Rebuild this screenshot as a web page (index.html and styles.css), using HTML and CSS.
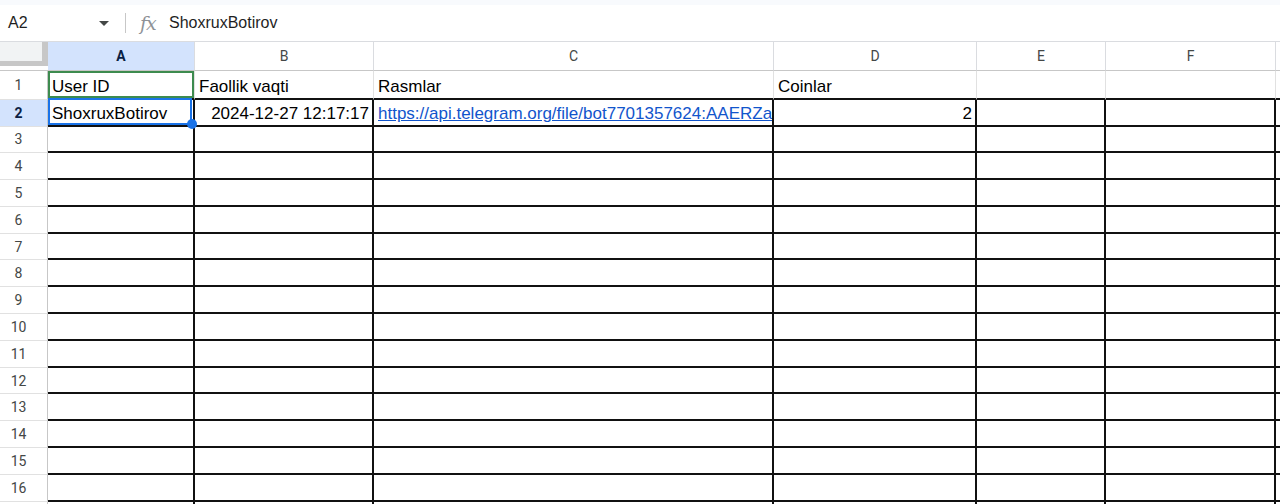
FILE: index.html
```html
<!DOCTYPE html>
<html>
<head>
<meta charset="utf-8">
<link rel="stylesheet" href="styles.css">
</head>
<body>
<div class="app">
  <div class="topstrip"></div>
  <div class="fbar">
    <div class="namebox"><span class="ref">A2</span><span class="caret"></span></div>
    <div class="sep"></div>
    <div class="fx">fx</div>
    <div class="ftext">ShoxruxBotirov</div>
  </div>
  <div class="sheet">
    <div class="corner"><div class="corner-in"></div></div>
    <div class="ch ch-sel">A</div>
    <div class="ch">B</div>
    <div class="ch">C</div>
    <div class="ch">D</div>
    <div class="ch">E</div>
    <div class="ch">F</div>
    <div class="ch ch-last"></div>

    <div class="rh">1</div>
    <div class="c r1 a1">User ID</div>
    <div class="c r1">Faollik vaqti</div>
    <div class="c r1">Rasmlar</div>
    <div class="c r1">Coinlar</div>
    <div class="c r1"></div>
    <div class="c r1"></div>
    <div class="c r1 last"></div>

    <div class="rh rh-sel">2</div>
    <div class="c a2">ShoxruxBotirov</div>
    <div class="c num">2024-12-27 12:17:17</div>
    <div class="c"><a class="link" href="#">https://api.telegram.org/file/bot7701357624:AAERZa</a></div>
    <div class="c num">2</div>
    <div class="c"></div>
    <div class="c"></div>
    <div class="c last"></div>

    <div class="rh">3</div><div class="c"></div><div class="c"></div><div class="c"></div><div class="c"></div><div class="c"></div><div class="c"></div><div class="c last"></div>
    <div class="rh">4</div><div class="c"></div><div class="c"></div><div class="c"></div><div class="c"></div><div class="c"></div><div class="c"></div><div class="c last"></div>
    <div class="rh">5</div><div class="c"></div><div class="c"></div><div class="c"></div><div class="c"></div><div class="c"></div><div class="c"></div><div class="c last"></div>
    <div class="rh">6</div><div class="c"></div><div class="c"></div><div class="c"></div><div class="c"></div><div class="c"></div><div class="c"></div><div class="c last"></div>
    <div class="rh">7</div><div class="c"></div><div class="c"></div><div class="c"></div><div class="c"></div><div class="c"></div><div class="c"></div><div class="c last"></div>
    <div class="rh">8</div><div class="c"></div><div class="c"></div><div class="c"></div><div class="c"></div><div class="c"></div><div class="c"></div><div class="c last"></div>
    <div class="rh">9</div><div class="c"></div><div class="c"></div><div class="c"></div><div class="c"></div><div class="c"></div><div class="c"></div><div class="c last"></div>
    <div class="rh">10</div><div class="c"></div><div class="c"></div><div class="c"></div><div class="c"></div><div class="c"></div><div class="c"></div><div class="c last"></div>
    <div class="rh">11</div><div class="c"></div><div class="c"></div><div class="c"></div><div class="c"></div><div class="c"></div><div class="c"></div><div class="c last"></div>
    <div class="rh">12</div><div class="c"></div><div class="c"></div><div class="c"></div><div class="c"></div><div class="c"></div><div class="c"></div><div class="c last"></div>
    <div class="rh">13</div><div class="c"></div><div class="c"></div><div class="c"></div><div class="c"></div><div class="c"></div><div class="c"></div><div class="c last"></div>
    <div class="rh">14</div><div class="c"></div><div class="c"></div><div class="c"></div><div class="c"></div><div class="c"></div><div class="c"></div><div class="c last"></div>
    <div class="rh">15</div><div class="c"></div><div class="c"></div><div class="c"></div><div class="c"></div><div class="c"></div><div class="c"></div><div class="c last"></div>
    <div class="rh">16</div><div class="c"></div><div class="c"></div><div class="c"></div><div class="c"></div><div class="c"></div><div class="c"></div><div class="c last"></div>
    <div class="rh"></div><div class="c"></div><div class="c"></div><div class="c"></div><div class="c"></div><div class="c"></div><div class="c"></div><div class="c last"></div>
  </div>
</div>
</body>
</html>
```

FILE: styles.css
```css
html, body {
  margin: 0;
  padding: 0;
  background: #ffffff;
  overflow: hidden;
}

.app {
  width: 1280px;
  height: 504px;
  overflow: hidden;
  font-family: "Liberation Sans", Arial, sans-serif;
  color: #000;
}

.topstrip {
  height: 5px;
  background: #f8fafd;
}

.fbar {
  height: 36px;
  border-bottom: 1px solid #dadce0;
  display: flex;
  align-items: center;
  background: #fff;
}

.namebox {
  width: 117px;
  box-sizing: border-box;
  padding: 0 8px;
  display: flex;
  align-items: center;
  justify-content: space-between;
  font-size: 16px;
  color: #1f1f1f;
}

.caret {
  width: 0;
  height: 0;
  border-left: 5px solid transparent;
  border-right: 5px solid transparent;
  border-top: 5px solid #444746;
}

.sep {
  width: 1px;
  height: 20px;
  background: #c7c7c7;
  margin-left: 8px;
}

.fx {
  margin-left: 14px;
  width: 19px;
  font-family: "DejaVu Serif", "Liberation Serif", serif;
  font-style: italic;
  font-size: 19px;
  color: #8e9297;
  line-height: 1;
  letter-spacing: -1px;
}

.ftext {
  margin-left: 10px;
  font-size: 16px;
  color: #1f1f1f;
}

.sheet {
  display: grid;
  grid-template-columns: 48px 147px 179px 400px 203px 129px 170px 1fr;
  grid-template-rows: 29px 29px 26.5px repeat(15, 26.8px);
}

.corner {
  box-sizing: border-box;
  padding-bottom: 4px;
  border-bottom: 1px solid #c7c7c7;
  background: #fff;
}

.corner-in {
  height: 100%;
  background: #f1f3f4;
  box-shadow: inset -6px 0 0 #c7c7c7, inset 0 -5px 0 #c7c7c7;
}

.ch {
  box-sizing: border-box;
  border-right: 1px solid #dadce0;
  border-bottom: 1px solid #c7c7c7;
  display: flex;
  align-items: center;
  justify-content: center;
  font-family: Roboto, "Liberation Sans", sans-serif;
  font-size: 14px;
  color: #444746;
  background: #fff;
}

.ch-sel {
  background: #d3e3fd;
  color: #0b1f44;
  font-weight: bold;
}

.ch-last {
  border-right: none;
}

.rh {
  box-sizing: border-box;
  border-right: 1px solid #c7c7c7;
  border-bottom: 1px solid #e1e1e1;
  display: flex;
  align-items: center;
  justify-content: center;
  padding-right: 10px;
  font-family: Roboto, "Liberation Sans", sans-serif;
  font-size: 14px;
  color: #444746;
  background: #fff;
}

.rh-sel {
  background: #d3e3fd;
  color: #0b1f44;
  font-weight: bold;
}

.c {
  box-sizing: border-box;
  border-right: 2px solid #111;
  border-bottom: 2px solid #111;
  padding: 0 3px 1px 4px;
  display: flex;
  align-items: flex-end;
  font-size: 17px;
  line-height: 20px;
  white-space: nowrap;
  overflow: hidden;
  min-width: 0;
}

.c.last {
  border-right: none;
}

.r1 {
  border-right: 1px solid #e1e1e1;
}

.a1 {
  box-shadow: inset 0 0 0 2px #3d8b4f;
}

.a2 {
  position: relative;
  overflow: visible;
}

.a2::before {
  content: "";
  position: absolute;
  left: 0;
  right: 1px;
  top: -2px;
  bottom: 0;
  border: 2px solid #1a73e8;
}

.a2::after {
  content: "";
  position: absolute;
  width: 10px;
  height: 10px;
  border-radius: 50%;
  background: #1a73e8;
  right: -4px;
  bottom: -4.5px;
  z-index: 2;
}

.num {
  justify-content: flex-end;
}

.link {
  color: #1155cc;
  text-decoration: underline;
}
```
